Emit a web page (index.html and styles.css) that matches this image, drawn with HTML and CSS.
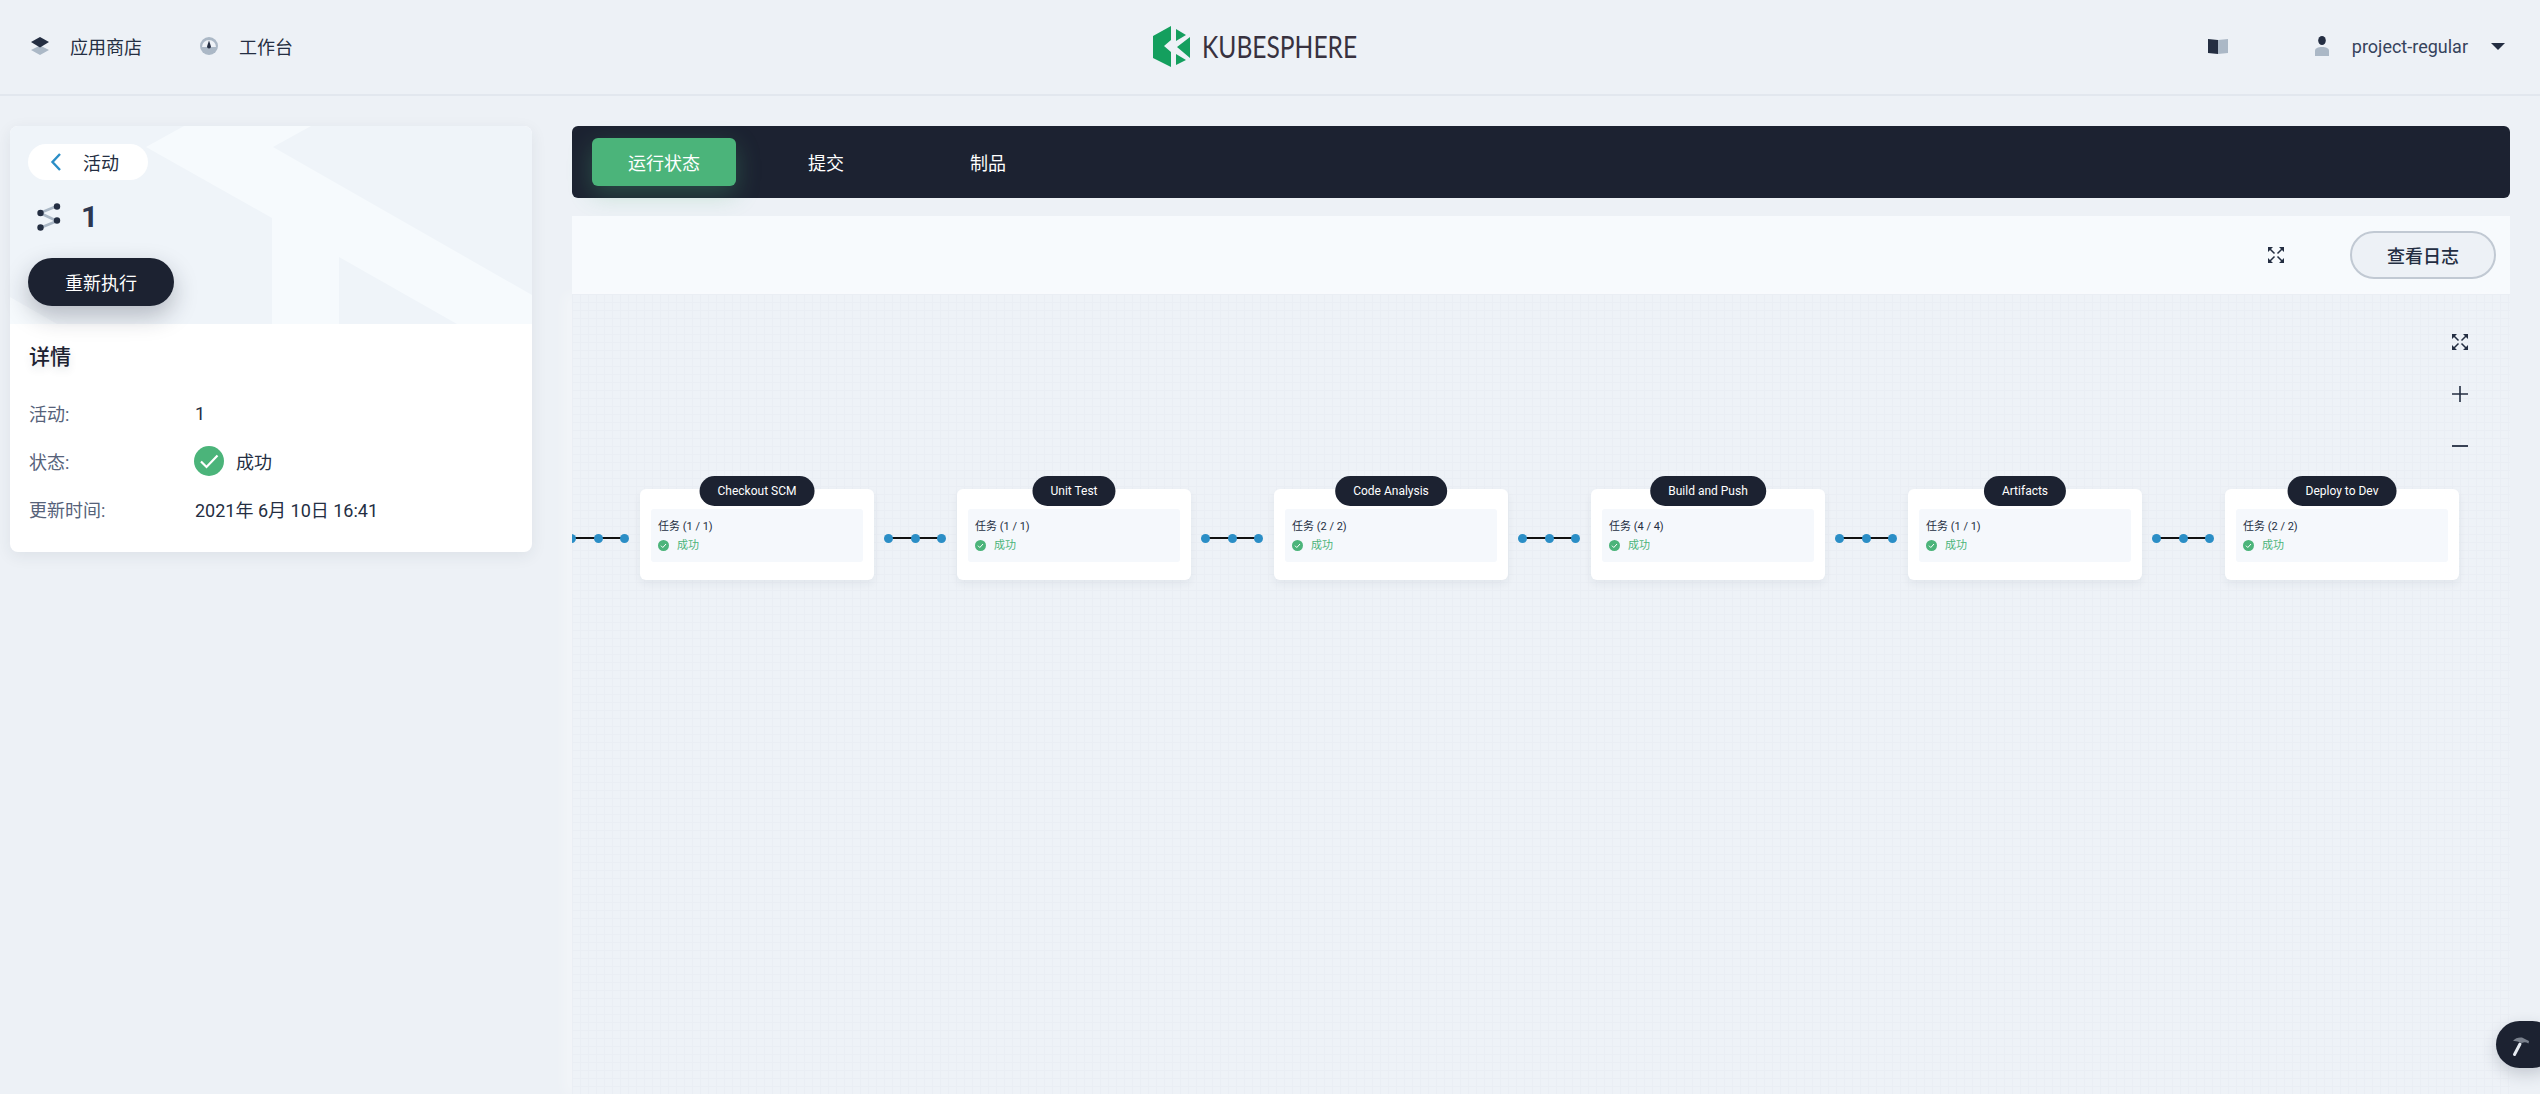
FILE: index.html
```html
<!DOCTYPE html>
<html lang="zh-CN">
<head>
    <meta charset="UTF-8">
    <title>KubeSphere</title>
    <link rel="stylesheet" href="styles.css">
</head>
<body>
  <!-- Header -->
  <header class="header">
    <nav class="header-nav">
      <a class="nav-item">
        <svg width="18" height="18" viewBox="0 0 18 18"><path d="M9 8.500 0 13l9 5 9-5z" fill="#abb8c6"/><path d="M9 0 0 5l9 5.500L18 5z" fill="#242e42"/></svg>
        <span>应用商店</span>
      </a>
      <a class="nav-item">
        <svg width="18" height="18" viewBox="0 0 18 18"><circle cx="9" cy="9" r="9" fill="#abb8c6"/><path d="M2 10a7 7 0 0 1 14 0z" fill="#eef2f7"/><path d="M9 3.500 11 9.500a2 2 0 0 1-4 0z" fill="#242e42"/></svg>
        <span>工作台</span>
      </a>
    </nav>
    <div class="logo">
      <svg width="37" height="41" viewBox="0 0 37 41">
        <path d="M18 0V14L11 20 18 26V41L0 32V10z" fill="#149f5e"/>
        <path d="M23 3 33 9 23 15zM37 11V32L24 21zM23 28 33 34 23 39z" fill="#149f5e"/>
      </svg>
      <span class="logo-text">KUBESPHERE</span>
    </div>
    <div class="header-right">
      <svg width="20" height="16" viewBox="0 0 20 16"><path d="M0 1l10 1v14L0 15z" fill="#242e42"/><path d="M10 2l10-1v14l-10 1z" fill="#abb8c6"/></svg>
      <div class="user">
        <svg width="14" height="20" viewBox="0 0 14 20"><ellipse cx="7" cy="4.500" rx="3.800" ry="4.500" fill="#242e42"/><path d="M0 20v-5c0-3 3-4 7-4s7 1 7 4v5z" fill="#abb8c6"/></svg>
        <span>project-regular</span>
        <i class="caret"></i>
      </div>
    </div>
  </header>

  <main class="page">
    <!-- Left card -->
    <aside class="side-card">
      <div class="banner">
        <svg class="banner-bg" width="522" height="198" viewBox="0 0 522 198">
          <path d="M136 21 174 0H301L263 21 522 169V198H447L329 131V198H262V92z" fill="#f6fafd"/>
          <path d="M0 171 47 198H0z" fill="#f6fafd"/>
        </svg>
        <a class="back-pill">
          <svg width="12" height="18" viewBox="0 0 12 18"><path d="M10 1 2.500 9l7.500 8" fill="none" stroke="#2b8ec6" stroke-width="2.400"/></svg>
          <span>活动</span>
        </a>
        <div class="run-title">
          <svg width="24" height="28" viewBox="0 0 24 28">
            <path d="M3 10 20 3M3 10 20 18M3 25 20 18" stroke="#abb8c6" stroke-width="2.500" fill="none"/>
            <circle cx="3.500" cy="10" r="3.200" fill="#242e42"/><circle cx="20" cy="3.500" r="3.200" fill="#242e42"/>
            <circle cx="20" cy="17.500" r="3.200" fill="#242e42"/><circle cx="3.500" cy="24.500" r="3.200" fill="#242e42"/>
          </svg>
          <span>1</span>
        </div>
        <button class="rerun">重新执行</button>
      </div>
      <div class="details">
        <h3>详情</h3>
        <dl>
          <div class="row"><dt>活动:</dt><dd>1</dd></div>
          <div class="row">
            <dt>状态:</dt>
            <dd class="status">
              <svg width="30" height="30" viewBox="0 0 30 30"><circle cx="15" cy="15" r="15" fill="#4bb47a"/><path d="M7 15.500l5.500 5.500 11-11.500" fill="none" stroke="#fff" stroke-width="2.200"/></svg>
              <span>成功</span>
            </dd>
          </div>
          <div class="row"><dt>更新时间:</dt><dd>2021年 6月 10日 16:41</dd></div>
        </dl>
      </div>
    </aside>

    <!-- Right content -->
    <section class="content">
      <div class="tabs">
        <a class="tab active">运行状态</a>
        <a class="tab">提交</a>
        <a class="tab">制品</a>
      </div>
      <div class="toolbar">
        <svg class="expand-icon" width="16" height="16" viewBox="0 0 16 16"><use href="#expand"/></svg>
        <button class="log-btn">查看日志</button>
      </div>
      <div class="canvas">
        <div class="canvas-tools">
          <svg class="expand-icon" width="16" height="16" viewBox="0 0 16 16"><use href="#expand"/></svg>
          <svg width="16" height="16" viewBox="0 0 16 16"><path d="M8 0v16M0 8h16" stroke="#242e42" stroke-width="1.600"/></svg>
          <svg width="16" height="16" viewBox="0 0 16 16"><path d="M0 8h16" stroke="#242e42" stroke-width="1.800"/></svg>
        </div>
        <div class="flow" id="flow"></div>
      </div>
    </section>
  </main>

  <button class="tool-btn">
    <svg width="20" height="24" viewBox="0 0 20 24"><path d="M3.500 21.500 9 11" stroke="#e6ebf1" stroke-width="3" stroke-linecap="round"/><path d="M2 8C4 5 8 4 11 4.500L18 8 17.500 10.500C15 9 13 9 11 10L8 9C6 8 4 8 2 8z" fill="#79808c"/></svg>
  </button>

  <svg width="0" height="0" class="defs">
    <symbol id="expand" viewBox="0 0 16 16">
      <path d="M0 0h5L0 5zM16 0v5L11 0zM0 16v-5l5 5zM16 16h-5l5-5z" fill="#242e42"/>
      <path d="M2 2 6.500 6.500M14 2 9.500 6.500M2 14 6.500 9.500M14 14 9.500 9.500" stroke="#242e42" stroke-width="1.500"/>
    </symbol>
  </svg>

  <script>
    const stages = [
      { name: "Checkout SCM", tasks: "1 / 1" },
      { name: "Unit Test", tasks: "1 / 1" },
      { name: "Code Analysis", tasks: "2 / 2" },
      { name: "Build and Push", tasks: "4 / 4" },
      { name: "Artifacts", tasks: "1 / 1" },
      { name: "Deploy to Dev", tasks: "2 / 2" }
    ];

    const flow = document.getElementById("flow");
    flow.innerHTML = stages.map(stage => `
      <div class="link"><i></i><i></i><i></i></div>
      <div class="node">
        <div class="node-name">${stage.name}</div>
        <div class="node-body">
          <div class="node-tasks">任务 (${stage.tasks})</div>
          <div class="node-status">
            <svg width="11" height="11" viewBox="0 0 11 11"><circle cx="5.500" cy="5.500" r="5.500" fill="#4bb47a"/><path d="M3 5.700l1.800 1.800L8 4" fill="none" stroke="#fff" stroke-width="1"/></svg>
            <span>成功</span>
          </div>
        </div>
      </div>`).join("");
  </script>
</body>
</html>
```

FILE: styles.css
```css
/* Global */
* {
    box-sizing: border-box;
}

html, body {
    height: 100%;
}

body {
    margin: 0;
    background-color: #edf1f6;
    color: #242e42;
    font-family: Roboto, "Noto Sans CJK SC", sans-serif;
    font-size: 18px;
    overflow: hidden;
}

button {
    font-family: inherit;
    cursor: pointer;
}

dl, dt, dd, h3 {
    margin: 0;
}

.defs {
    position: absolute;
}

/* Header */
.header {
    height: 96px;
    padding: 0 35px 2px 31px;
    display: grid;
    grid-template-columns: 1122px auto 1fr;
    align-items: center;
    border-bottom: 2px solid #e2e7ee;
}

.header-nav {
    display: flex;
    gap: 58px;
}

.nav-item {
    display: flex;
    align-items: center;
    gap: 21px;
}

.logo {
    display: flex;
    align-items: center;
    gap: 12px;
}

.logo-text {
    width: 153px;
    font-family: Lato, sans-serif;
    font-size: 30px;
    line-height: 42px;
    color: #38323f;
    white-space: nowrap;
    transform-origin: left center;
    transform: scaleX(0.82);
}

.header-right {
    display: flex;
    align-items: center;
    justify-content: flex-end;
    gap: 87px;
}

.user {
    display: flex;
    align-items: center;
    color: #36435c;
}

.user span {
    margin: 0 23px;
}

.caret {
    width: 0;
    height: 0;
    border-left: 7px solid transparent;
    border-right: 7px solid transparent;
    border-top: 7px solid #242e42;
}

/* Page layout */
.page {
    height: calc(100% - 96px);
    padding: 30px 30px 0 10px;
    display: flex;
    align-items: flex-start;
    gap: 40px;
}

/* Left card */
.side-card {
    width: 522px;
    flex: none;
    background-color: #fff;
    border-radius: 8px;
    box-shadow: 0 4px 16px rgba(36, 46, 66, 0.08);
}

.banner {
    position: relative;
    height: 198px;
    padding: 18px 18px 0;
    background-color: #eff4f9;
    border-radius: 8px 8px 0 0;
}

.banner-bg {
    position: absolute;
    top: 0;
    left: 0;
}

.back-pill {
    position: relative;
    width: 120px;
    height: 36px;
    padding-left: 22px;
    display: flex;
    align-items: center;
    gap: 21px;
    background-color: #fff;
    border-radius: 18px;
}

.run-title {
    position: relative;
    margin: 23px 0 0 9px;
    display: flex;
    align-items: center;
    gap: 20px;
    font-size: 30px;
    font-weight: 700;
    line-height: 28px;
    color: #2d3750;
}

.rerun {
    position: relative;
    display: block;
    width: 146px;
    height: 48px;
    margin-top: 27px;
    padding: 0;
    border: none;
    border-radius: 24px;
    background-color: #1c2231;
    color: #fff;
    font-size: 18px;
    box-shadow: 0 10px 24px rgba(28, 34, 49, 0.28);
}

.details {
    padding: 19px 19px 19px;
}

.details h3 {
    font-size: 21px;
    font-weight: 500;
    line-height: 28px;
    color: #1c2231;
    text-shadow: 0 4px 8px rgba(36, 46, 66, 0.12);
}

.details dl {
    margin-top: 18px;
}

.row {
    display: flex;
    align-items: center;
    height: 48px;
}

.row dt {
    width: 166px;
    color: #56627a;
}

.status {
    display: flex;
    align-items: center;
    gap: 12px;
    margin-left: -1px;
}

/* Right content */
.content {
    flex: 1;
    height: 100%;
    display: flex;
    flex-direction: column;
}

.tabs {
    height: 72px;
    padding: 12px 20px;
    display: flex;
    gap: 18px;
    background-color: #1c2231;
    border-radius: 6px;
}

.tab {
    width: 144px;
    display: flex;
    align-items: center;
    justify-content: center;
    color: #fff;
    border-radius: 6px;
}

.tab.active {
    background-color: #4bb47a;
    box-shadow: 0 8px 24px rgba(75, 180, 122, 0.3);
}

.toolbar {
    height: 78px;
    margin-top: 18px;
    padding-right: 14px;
    display: flex;
    align-items: center;
    justify-content: flex-end;
    gap: 66px;
    background-color: #f7fafd;
}

.expand-icon {
    display: block;
}

.log-btn {
    width: 146px;
    height: 48px;
    padding: 0;
    border: 2px solid #c1c9d3;
    border-radius: 24px;
    background-color: #edf1f6;
    color: #242e42;
    font-size: 18px;
    font-weight: 500;
}

/* Pipeline canvas */
.canvas {
    position: relative;
    flex: 1;
    overflow: hidden;
    background-color: #eef2f7;
    background-image:
        linear-gradient(#eaeef4 1px, transparent 1px),
        linear-gradient(90deg, #eaeef4 1px, transparent 1px);
    background-size: 8px 8px;
    box-shadow: -8px 0 12px rgba(255, 255, 255, 0.3);
}

.canvas-tools {
    position: absolute;
    top: 40px;
    right: 42px;
    display: flex;
    flex-direction: column;
    gap: 36px;
}

.canvas-tools svg {
    display: block;
}

.flow {
    margin: 195px 0 0 -5px;
    display: flex;
    align-items: flex-start;
}

.link {
    position: relative;
    flex: none;
    width: 62px;
    height: 9px;
    margin: 45px 11px 0 10px;
    display: flex;
    justify-content: space-between;
}

.link:first-child {
    margin-left: 0;
}

.link::before {
    content: "";
    position: absolute;
    top: 3px;
    left: 4px;
    right: 4px;
    height: 2px;
    background-color: #111;
}

.link i {
    position: relative;
    width: 9px;
    height: 9px;
    border-radius: 50%;
    background-color: #2b8ec6;
}

.node {
    position: relative;
    flex: none;
    width: 234px;
    height: 91px;
    padding: 20px 11px 0;
    background-color: #fff;
    border-radius: 6px;
    box-shadow: 0 4px 8px rgba(36, 46, 66, 0.06);
}

.node-name {
    position: absolute;
    top: -13px;
    left: 50%;
    height: 30px;
    padding: 0 18px;
    transform: translateX(-50%);
    display: flex;
    align-items: center;
    background-color: #1c2231;
    border-radius: 15px;
    color: #fff;
    font-size: 12px;
    white-space: nowrap;
}

.node-body {
    height: 53px;
    padding: 8px 7px;
    background-color: #f5f8fc;
    border-radius: 3px;
    font-size: 11px;
    line-height: 19px;
}

.node-status {
    display: flex;
    align-items: center;
    gap: 8px;
    color: #4bb47a;
}

/* Floating tool button */
.tool-btn {
    position: absolute;
    top: 1021px;
    left: 2496px;
    width: 60px;
    height: 47px;
    padding: 0 0 0 15px;
    display: flex;
    align-items: center;
    border: none;
    border-radius: 24px;
    background-color: #1c2231;
    box-shadow: 0 6px 16px rgba(36, 46, 66, 0.2);
}
```
